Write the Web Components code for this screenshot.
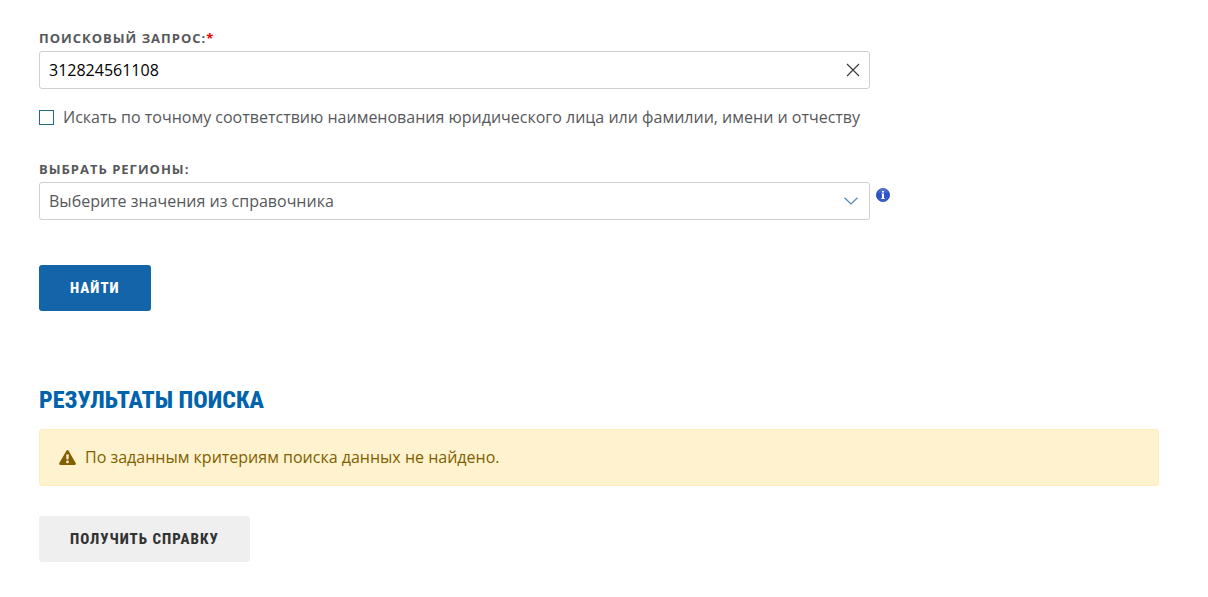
<!DOCTYPE html>
<html lang="ru">
<head>
<meta charset="utf-8">
<meta name="viewport" content="width=device-width, initial-scale=1">
<title>Поиск</title>
<style>
  body {
    margin: 0;
    background: #fff;
    color: #57585b;
    font: 16px/24px "Open Sans", "Noto Sans", sans-serif;
  }
</style>
</head>
<body>
<search-page></search-page>

<script>
const fieldCss = /*css*/`
  :host { display: block; }

  * { box-sizing: border-box; }

  label {
    display: block;
    margin-bottom: 4px;
    font-size: 13px;
    font-weight: 700;
    line-height: 18px;
    letter-spacing: 1px;
    text-transform: uppercase;
  }

  .box {
    display: grid;
    align-items: center;
  }

  .box > * { grid-area: 1 / 1; }

  input, select {
    width: 100%;
    height: 38px;
    margin: 0;
    border: 1px solid #d0d0d0;
    border-radius: 3px;
    background: #fff;
    font: inherit;
    appearance: none;
  }

  input:focus-visible, select:focus-visible {
    border-color: #1464a9;
    outline: none;
  }
`

class TextField extends HTMLElement {
  connectedCallback() {
    this.attachShadow({ mode: "open" }).innerHTML = /*html*/`
      <style>
        ${fieldCss}
        input { padding: 0 40px 0 9px; color: #000; }
        .required { color: #f00000; }
        button {
          justify-self: end;
          display: flex;
          margin-right: 6px;
          padding: 4px;
          border: 0;
          background: none;
          color: #37383c;
          cursor: pointer;
        }
      </style>
      <label for="field"><slot></slot><span class="required">*</span></label>
      <div class="box">
        <input id="field" type="text" required>
        <button type="button" aria-label="Очистить">
          <svg width="14" height="14" viewBox="0 0 14 14" fill="none" stroke="currentColor" stroke-width="1.1">
            <path d="M1 1l12 12M13 1L1 13"/>
          </svg>
        </button>
      </div>
    `
    const input = this.shadowRoot.querySelector("input")
    input.value = this.getAttribute("value") || ""
    this.shadowRoot.querySelector("button").addEventListener("click", () => {
      input.value = ""
      input.focus()
    })
  }
}

class SelectField extends HTMLElement {
  connectedCallback() {
    this.attachShadow({ mode: "open" }).innerHTML = /*html*/`
      <style>
        ${fieldCss}
        select { padding: 0 40px 0 9px; color: #57585b; }
        svg {
          justify-self: end;
          margin-right: 12px;
          pointer-events: none;
        }
      </style>
      <label for="field"><slot></slot></label>
      <div class="box">
        <select id="field">
          <option>${this.getAttribute("placeholder")}</option>
        </select>
        <svg width="14" height="8" viewBox="0 0 14 8" fill="none" stroke="#4f87b8" stroke-width="1.2">
          <path d="M.5 .7L7 7l6.500-6.300"/>
        </svg>
      </div>
    `
  }
}

class CheckField extends HTMLElement {
  connectedCallback() {
    this.attachShadow({ mode: "open" }).innerHTML = /*html*/`
      <style>
        :host { display: block; }
        label { display: flex; align-items: center; gap: 9px; }
        input {
          flex: none;
          box-sizing: border-box;
          width: 15px;
          height: 15px;
          margin: 0;
          border: 1px solid #24688f;
          background: #fff;
          appearance: none;
        }
        input:checked { background: #1464a9; box-shadow: inset 0 0 0 2px #fff; }
      </style>
      <label><input type="checkbox"><span><slot></slot></span></label>
    `
  }
}

class InfoHint extends HTMLElement {
  connectedCallback() {
    this.attachShadow({ mode: "open" }).innerHTML = /*html*/`
      <style>
        :host { display: block; }
        svg { display: block; }
      </style>
      <svg width="14" height="14" viewBox="0 0 14 14" role="img" aria-label="Подсказка">
        <defs>
          <linearGradient id="ball" x1="0" y1="0" x2="0" y2="1">
            <stop offset="0" stop-color="#5c83df"/>
            <stop offset=".45" stop-color="#2c50c4"/>
            <stop offset="1" stop-color="#3d60d2"/>
          </linearGradient>
        </defs>
        <circle cx="7" cy="7" r="6.600" fill="url(#ball)" stroke="#2c4cb4" stroke-width=".8"/>
        <path fill="#fff" d="M6 3h2v1.500H6zM5.500 5.500H8v4.500h.7v1H5.300v-1H6V6.500h-.5z"/>
      </svg>
    `
  }
}

class ActionButton extends HTMLElement {
  connectedCallback() {
    this.attachShadow({ mode: "open" }).innerHTML = /*html*/`
      <style>
        :host { display: block; }
        button {
          display: block;
          height: 46px;
          padding: 0 31px;
          border: 0;
          border-radius: 3px;
          background: #efefef;
          color: #333;
          font: 800 15px/20px "Roboto Condensed", Roboto, sans-serif;
          letter-spacing: 1px;
          text-transform: uppercase;
          cursor: pointer;
        }
        :host([primary]) button { background: #1464a9; color: #fff; }
        button:focus-visible { outline: 2px solid #7fb2dc; }
      </style>
      <button type="button"><slot></slot></button>
    `
  }
}

class AlertMessage extends HTMLElement {
  connectedCallback() {
    this.attachShadow({ mode: "open" }).innerHTML = /*html*/`
      <style>
        :host {
          display: flex;
          align-items: center;
          gap: 9px;
          padding: 15px 19px 16px;
          border: 1px solid #ffeeba;
          border-radius: 3px;
          background: #fff2cf;
          color: #806000;
        }
        svg { flex: none; }
      </style>
      <svg width="17" height="15" viewBox="0 0 16 15" preserveAspectRatio="none" aria-hidden="true">
        <path fill="currentColor" fill-rule="evenodd" d="M7.100 .6Q8-.4 8.900 .6L15.700 13Q16.300 14.700 14.800 15H1.200Q-.3 14.700 .3 13ZM6.700 4.500L7.100 9.500H8.900L9.300 4.500ZM8 10.600A1.300 1.300 0 1 0 8 13.200A1.300 1.300 0 1 0 8 10.600Z"/>
      </svg>
      <span role="status"><slot></slot></span>
    `
  }
}

class SearchPage extends HTMLElement {
  connectedCallback() {
    this.attachShadow({ mode: "open" }).innerHTML = /*html*/`
      <style>
        :host {
          display: block;
          padding: 29px 49px 35px 39px;
        }
        form {
          display: grid;
          grid-template-columns: minmax(0, 831px) 14px;
          column-gap: 6px;
        }
        text-field, check-field, select-field, action-button { grid-column: 1; }
        check-field { margin: 16px 0 31px; }
        info-hint { align-self: end; margin-bottom: 18px; }
        form action-button { margin-top: 45px; justify-self: start; }
        h2 {
          margin: 73px 0 13px;
          color: #0063ac;
          font: 800 24px/32px "Roboto Condensed", Roboto, sans-serif;
          text-transform: uppercase;
        }
        alert-message { margin-bottom: 30px; }
        section action-button { width: fit-content; }
      </style>
      <form>
        <text-field value="312824561108">Поисковый запрос:</text-field>
        <check-field>Искать по точному соответствию наименования юридического лица или фамилии, имени и отчеству</check-field>
        <select-field placeholder="Выберите значения из справочника">Выбрать регионы:</select-field>
        <info-hint></info-hint>
        <action-button primary>Найти</action-button>
      </form>
      <section>
        <h2>Результаты поиска</h2>
        <alert-message>По заданным критериям поиска данных не найдено.</alert-message>
        <action-button>Получить справку</action-button>
      </section>
    `
  }
}

customElements.define("text-field", TextField)
customElements.define("select-field", SelectField)
customElements.define("check-field", CheckField)
customElements.define("info-hint", InfoHint)
customElements.define("action-button", ActionButton)
customElements.define("alert-message", AlertMessage)
customElements.define("search-page", SearchPage)
</script>
</body>
</html>
